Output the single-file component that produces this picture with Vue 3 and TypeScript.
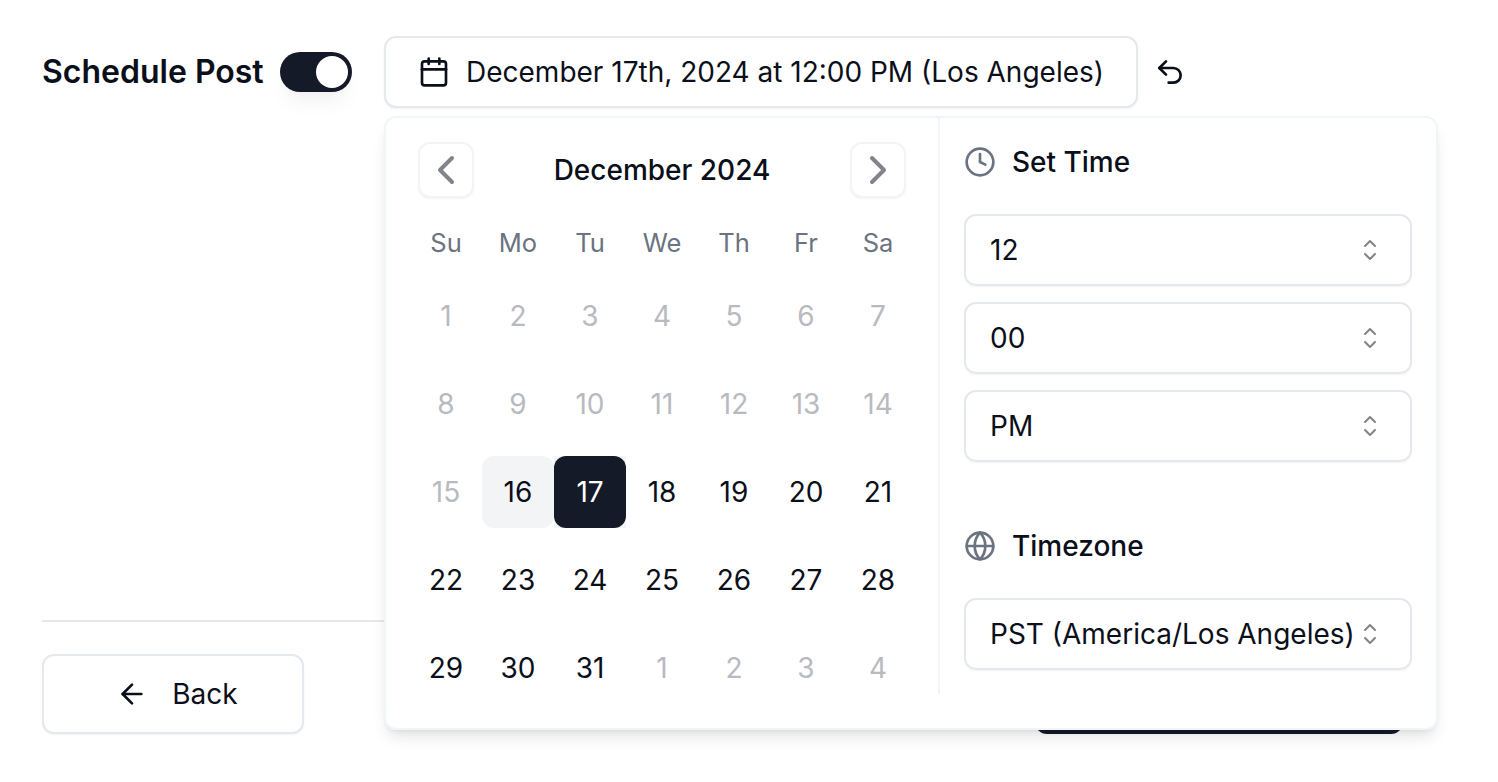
<script setup lang="ts">
interface Day { n: number; kind: 'off' | 'on' | 'hover' | 'sel' }
const weekdays = ['Su', 'Mo', 'Tu', 'We', 'Th', 'Fr', 'Sa']
const days: Day[] = []
for (let n = 1; n <= 15; n++) days.push({ n, kind: 'off' })
days.push({ n: 16, kind: 'hover' })
days.push({ n: 17, kind: 'sel' })
for (let n = 18; n <= 31; n++) days.push({ n, kind: 'on' })
for (let n = 1; n <= 4; n++) days.push({ n, kind: 'off' })
const timeValues = ['12', '00', 'PM']
</script>

<template>
  <div class="page">
    <div class="top">
      <span class="label">Schedule Post</span>
      <span class="toggle"><span class="thumb"></span></span>
      <button class="date-btn">
        <svg class="icon" viewBox="0 0 24 24"><path d="M8 2v4M16 2v4" /><rect x="3" y="4" width="18" height="18" rx="2" /><path d="M3 10h18" /></svg>
        <span>December 17th, 2024 at 12:00 PM (Los Angeles)</span>
      </button>
      <svg class="undo" viewBox="0 0 24 24"><path d="M9 14 4 9l5-5" /><path d="M4 9h10.5a5.5 5.5 0 0 1 5.5 5.5a5.5 5.5 0 0 1-5.5 5.5H11" /></svg>
    </div>

    <div class="sep"></div>

    <div class="foot">
      <button class="back">
        <svg class="icon" viewBox="0 0 24 24"><path d="m12 19-7-7 7-7" /><path d="M19 12H5" /></svg>
        <span>Back</span>
      </button>
      <button class="next"></button>
    </div>

    <div class="popover">
      <div class="cal">
        <div class="cal-head">
          <button class="nav"><svg viewBox="0 0 24 24"><path d="m15 18-6-6 6-6" /></svg></button>
          <span class="month">December 2024</span>
          <button class="nav"><svg viewBox="0 0 24 24"><path d="m9 18 6-6-6-6" /></svg></button>
        </div>
        <div class="weekdays">
          <span v-for="w in weekdays" :key="w">{{ w }}</span>
        </div>
        <div class="grid">
          <div v-for="(d, i) in days" :key="i" class="cell" :class="d.kind">
            <span class="inner">{{ d.n }}</span>
          </div>
        </div>
      </div>
      <div class="side">
        <div class="side-head">
          <svg class="side-icon" viewBox="0 0 24 24"><circle cx="12" cy="12" r="10" /><path d="M12 6v6l4 2" /></svg>
          <span>Set Time</span>
        </div>
        <div class="selects">
          <div v-for="v in timeValues" :key="v" class="select">
            <span>{{ v }}</span>
            <svg class="chev" viewBox="0 0 24 24"><path d="M8.25 15 12 18.75 15.75 15" /><path d="M8.25 9 12 5.25 15.75 9" /></svg>
          </div>
        </div>
        <div class="side-head tz">
          <svg class="side-icon" viewBox="0 0 24 24"><circle cx="12" cy="12" r="10" /><path d="M12 2a14.5 14.5 0 0 0 0 20 14.5 14.5 0 0 0 0-20" /><path d="M2 12h20" /></svg>
          <span>Timezone</span>
        </div>
        <div class="select">
          <span class="val">PST (America/Los Angeles)</span>
          <svg class="chev" viewBox="0 0 24 24"><path d="M8.25 15 12 18.75 15.75 15" /><path d="M8.25 9 12 5.25 15.75 9" /></svg>
        </div>
      </div>
    </div>
  </div>
</template>

<style>
html, body { background: #fff; }
</style>

<style scoped>
.page {
  position: relative;
  box-sizing: border-box;
  width: 1498px;
  height: 782px;
  overflow: hidden;
  padding: 36px 95px 0 42px;
  font-family: Inter, "Liberation Sans", sans-serif;
  color: #0b0f1a;
  background: #fff;
}
svg { fill: none; stroke: currentColor; stroke-width: 2; stroke-linecap: round; stroke-linejoin: round; display: block; }
button { font: inherit; color: inherit; background: #fff; padding: 0; }
.top { display: flex; align-items: center; height: 72px; }
.label { font-size: 32px; line-height: 40px; font-weight: 600; width: 238px; }
.toggle {
  display: flex; justify-content: flex-end; align-items: center;
  box-sizing: border-box; width: 72px; height: 40px; padding: 4px;
  border-radius: 20px; background: #141a28;
  box-shadow: 0 14px 20px -4px rgba(0,0,0,.05), 0 4px 8px -4px rgba(0,0,0,.03);
}
.thumb { width: 32px; height: 32px; border-radius: 50%; background: #fff; }
.date-btn {
  display: flex; align-items: center; gap: 16px;
  box-sizing: border-box; width: 754px; height: 72px; margin-left: 32px; padding: 0 32px;
  border: 2px solid #e5e8ee; border-radius: 12px;
  font-size: 28px; line-height: 40px; white-space: nowrap;
  box-shadow: 0 1px 2px rgba(0,0,0,.05);
}
.icon { width: 32px; height: 32px; flex: none; }
.undo { width: 32px; height: 32px; margin-left: 16px; }
.sep { height: 2px; margin-top: 512px; background: #e5e7eb; }
.foot { display: flex; justify-content: space-between; margin-top: 32px; }
.back {
  display: flex; align-items: center; justify-content: center; gap: 24px;
  box-sizing: border-box; width: 262px; height: 80px; padding-left: 8px;
  border: 2px solid #e5e8ee; border-radius: 12px;
  font-size: 28px; line-height: 40px;
  box-shadow: 0 1px 2px rgba(0,0,0,.05);
}
.next { width: 368px; height: 80px; border: 0; border-radius: 12px; background: #141a28; }
.popover {
  position: absolute; left: 384px; top: 116px;
  display: flex; align-items: flex-start;
  box-sizing: border-box; width: 1054px; height: 614px;
  border: 2px solid #f1f5f9; border-radius: 12px; background: #fff;
  box-shadow: 0 10px 15px -3px rgba(0,0,0,.1), 0 4px 6px -4px rgba(0,0,0,.1);
}
.cal {
  box-sizing: border-box; flex: none; width: 554px; height: 576px; padding: 24px;
  border-right: 2px solid #f1f5f9;
}
.cal-head { display: flex; align-items: center; justify-content: space-between; padding: 0 8px; height: 56px; }
.nav {
  display: flex; align-items: center; justify-content: center;
  box-sizing: border-box; width: 56px; height: 56px;
  border: 2px solid #f3f4f6; border-radius: 12px; color: #82848b;
  box-shadow: 0 1px 2px rgba(0,0,0,.05);
}
.nav svg { width: 48px; height: 48px; flex: none; }
.month { font-size: 28px; line-height: 40px; font-weight: 500; }
.weekdays { display: grid; grid-template-columns: repeat(7, 72px); margin-top: 25px; font-size: 25.5px; line-height: 40px; color: #6b7280; text-align: center; }
.grid { display: grid; grid-template-columns: repeat(7, 72px); grid-auto-rows: 72px; row-gap: 16px; margin-top: 17px; }
.cell { display: flex; font-size: 28px; }
.inner { flex: 1; display: flex; align-items: center; justify-content: center; border-radius: 12px; }
.off { color: #b8bac0; }
.hover .inner { background: #f3f4f6; }
.sel { background: #f3f4f6; }
.sel .inner { background: #141a28; color: #fff; }
.side { box-sizing: border-box; flex: none; width: 496px; padding: 24px; }
.side-head { display: flex; align-items: center; gap: 16px; height: 40px; font-size: 28px; font-weight: 500; }
.side-icon { width: 32px; height: 32px; color: #6b7280; }
.selects { display: flex; flex-direction: column; gap: 16px; margin: 32px 0 0; }
.tz { margin: 64px 0 32px; }
.select {
  display: flex; align-items: center; justify-content: space-between;
  box-sizing: border-box; height: 72px; padding: 0 24px;
  border: 2px solid #e5e8ee; border-radius: 12px;
  font-size: 28px; white-space: nowrap;
  box-shadow: 0 1px 2px rgba(0,0,0,.05);
}
.val { flex: 1; min-width: 0; }
.chev { width: 32px; height: 32px; flex: none; color: #808389; stroke-width: 1.5; }
</style>
